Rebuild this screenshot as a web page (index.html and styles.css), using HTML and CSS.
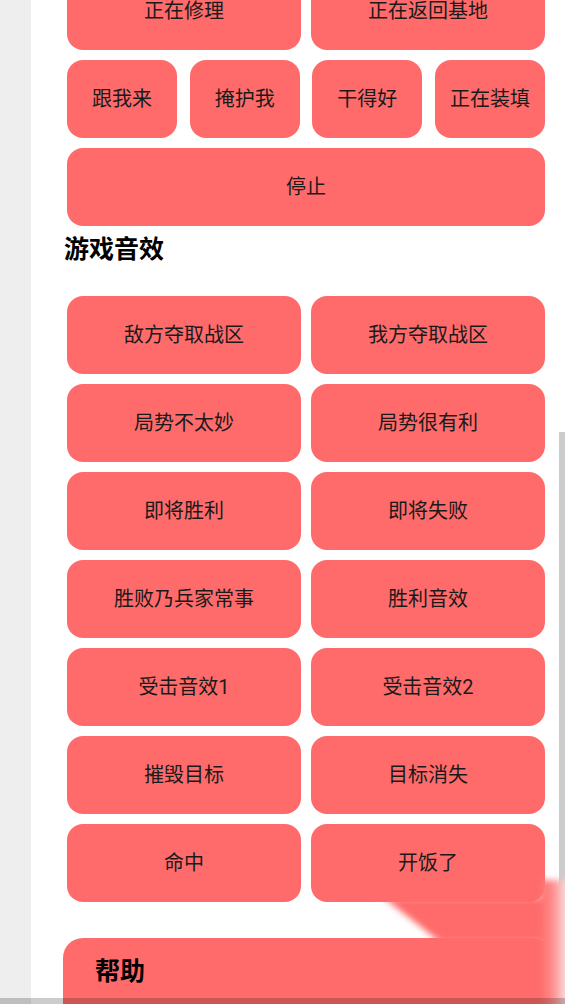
FILE: index.html
```html
<!DOCTYPE html>
<html lang="zh-CN">
<head>
<meta charset="utf-8">
<title>语音包</title>
<link rel="stylesheet" href="styles.css">
</head>
<body>
<div class="app">
  <div class="side"></div>
  <main class="main">
    <div class="grid two first">
      <button class="btn">正在修理</button>
      <button class="btn">正在返回基地</button>
    </div>
    <div class="grid four">
      <button class="btn">跟我来</button>
      <button class="btn">掩护我</button>
      <button class="btn">干得好</button>
      <button class="btn">正在装填</button>
    </div>
    <div class="grid one">
      <button class="btn">停止</button>
    </div>

    <h2 class="heading">游戏音效</h2>

    <div class="grid two sounds">
      <button class="btn">敌方夺取战区</button>
      <button class="btn">我方夺取战区</button>
      <button class="btn">局势不太妙</button>
      <button class="btn">局势很有利</button>
      <button class="btn">即将胜利</button>
      <button class="btn">即将失败</button>
      <button class="btn">胜败乃兵家常事</button>
      <button class="btn">胜利音效</button>
      <button class="btn">受击音效1</button>
      <button class="btn">受击音效2</button>
      <button class="btn">摧毁目标</button>
      <button class="btn">目标消失</button>
      <button class="btn">命中</button>
      <button class="btn">开饭了</button>
    </div>

    <section class="card">
      <h2 class="card-title">帮助</h2>
    </section>
  </main>
</div>

<div class="vscroll"></div>
<svg class="smear" width="205" height="134" viewBox="0 0 205 134" aria-hidden="true">
  <defs>
    <filter id="blur" x="-20%" y="-20%" width="140%" height="140%">
      <feGaussianBlur stdDeviation="3"/>
    </filter>
    <linearGradient id="fadeR" x1="0" y1="0" x2="1" y2="0">
      <stop offset="0" stop-color="#ff6b6b"/>
      <stop offset="0.45" stop-color="#ff8f8f"/>
      <stop offset="1" stop-color="#f4f4f4"/>
    </linearGradient>
  </defs>
  <polygon points="24,28 80,72 192,72 192,28" fill="#ff6b6b" filter="url(#blur)"/>
  <rect x="180" y="10" width="30" height="130" fill="url(#fadeR)" filter="url(#blur)"/>
</svg>
<div class="hscroll"></div>
</body>
</html>
```

FILE: styles.css
```css
* { box-sizing: border-box; }

html, body {
  margin: 0;
  padding: 0;
  height: 1004px;
  overflow: hidden;
  background: #fff;
}

body {
  font-family: Roboto, "Noto Sans CJK SC", sans-serif;
  color: #1a1a1a;
}

.app {
  display: flex;
  min-height: 1004px;
}

.side {
  width: 31px;
  flex: 0 0 31px;
  background: #eeeeee;
}

.main {
  flex: 1;
  background: #fff;
  padding-left: 33px;
}

.grid {
  display: grid;
  margin-left: 3px;
  width: 478px;
  margin-bottom: 10px;
}

.grid.first { margin-top: -28px; }

.grid.two {
  grid-template-columns: 1fr 1fr;
  column-gap: 10px;
  row-gap: 10px;
}

.grid.four {
  grid-template-columns: repeat(4, 110px);
  justify-content: space-between;
}

.grid.one { grid-template-columns: 1fr; margin-bottom: 0; }

.btn {
  height: 78px;
  border: 0;
  border-radius: 16px;
  background: #ff6b6b;
  color: #1a1a1a;
  font-family: Roboto, "Noto Sans CJK SC", sans-serif;
  font-size: 20px;
  line-height: 1;
  padding: 0;
  display: flex;
  align-items: center;
  justify-content: center;
}

.heading {
  margin: 6px 0 28px 0;
  font-size: 25px;
  line-height: 36px;
  font-weight: 700;
  color: #000;
}

.grid.sounds { margin-bottom: 36px; }

.card {
  margin-left: -1px;
  width: 490px;
  height: 120px;
  background: #ff6b6b;
  border-radius: 20px;
  padding: 16px 0 0 32px;
}

.card-title {
  margin: 0;
  font-size: 25px;
  line-height: 36px;
  font-weight: 700;
  color: #000;
}

.vscroll {
  position: absolute;
  left: 559px;
  top: 432px;
  width: 6px;
  height: 480px;
  background: #cccccc;
}

.smear {
  position: absolute;
  left: 360px;
  top: 870px;
}

.hscroll {
  position: absolute;
  left: 0;
  top: 998px;
  width: 565px;
  height: 6px;
  background: rgba(0, 0, 0, 0.2);
}
```
